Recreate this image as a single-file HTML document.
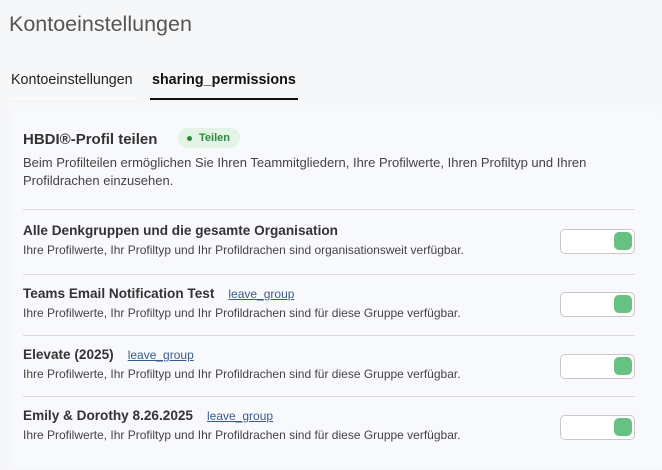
<html><head><style>
body{margin:0;width:662px;height:470px;background:#f6f7f9;font-family:"Liberation Sans",Arial,sans-serif;position:relative;overflow:hidden}
.a{position:absolute;white-space:nowrap}
.card{position:absolute;left:10px;top:111px;width:652px;height:357px;background:#f8f9fc;border-radius:4px}
.h{font-size:13.6px;font-weight:bold;color:#333}
.s{font-size:12px;color:#444}
.l{font-size:12px;color:#3a5a8c;text-decoration:underline;font-weight:normal;margin-left:14px}
.hr{position:absolute;left:23px;width:612px;height:1px;background:#dcdcdc}
.t{position:absolute;left:560px;width:73px;height:23px;border:1px solid #c8c8c8;border-radius:5px;background:#fff}
.t:after{content:"";position:absolute;right:2px;top:2px;width:18px;height:18px;border-radius:5px;background:#66c283}
</style></head><body>
<div class="a" style="left:9px;top:12px;font-size:21.5px;color:#555">Kontoeinstellungen</div>
<div class="a" style="left:11px;top:72px;font-size:14.3px;color:#222">Kontoeinstellungen</div>
<div class="a" style="left:10px;top:98px;width:126px;height:1px;background:#fff"></div>
<div class="a" style="left:152px;top:72px;font-size:14.3px;font-weight:bold;color:#111">sharing_permissions</div>
<div class="a" style="left:150px;top:98px;width:148px;height:2px;background:#111"></div>
<div class="card"></div>
<div class="a" style="left:23px;top:131px;font-size:15px;font-weight:bold;color:#333">HBDI®-Profil teilen</div>
<div class="a" style="left:178px;top:128px;height:20px;width:62px;border-radius:10px;background:#e3f3e6"></div>
<div class="a" style="left:187px;top:136px;width:5px;height:5px;border-radius:50%;background:#2e8a40"></div>
<div class="a" style="left:199px;top:132px;font-size:11px;font-weight:bold;color:#2e8a40">Teilen</div>
<div class="a" style="left:23px;top:154px;font-size:13px;color:#444;line-height:18px">Beim Profilteilen ermöglichen Sie Ihren Teammitgliedern, Ihre Profilwerte, Ihren Profiltyp und Ihren<br>Profildrachen einzusehen.</div>
<div class="hr" style="top:209px"></div>
<div class="a h" style="left:23px;top:223px">Alle Denkgruppen und die gesamte Organisation</div>
<div class="a s" style="left:23px;top:243px">Ihre Profilwerte, Ihr Profiltyp und Ihr Profildrachen sind organisationsweit verfügbar.</div>
<div class="t" style="top:229px"></div>
<div class="hr" style="top:274px"></div>
<div class="a h" style="left:23px;top:286px">Teams Email Notification Test<span class="l">leave_group</span></div>
<div class="a s" style="left:23px;top:306px">Ihre Profilwerte, Ihr Profiltyp und Ihr Profildrachen sind für diese Gruppe verfügbar.</div>
<div class="t" style="top:292px"></div>
<div class="hr" style="top:335px"></div>
<div class="a h" style="left:23px;top:347px">Elevate (2025)<span class="l">leave_group</span></div>
<div class="a s" style="left:23px;top:367px">Ihre Profilwerte, Ihr Profiltyp und Ihr Profildrachen sind für diese Gruppe verfügbar.</div>
<div class="t" style="top:354px"></div>
<div class="hr" style="top:396px"></div>
<div class="a h" style="left:23px;top:408px">Emily &amp; Dorothy 8.26.2025<span class="l">leave_group</span></div>
<div class="a s" style="left:23px;top:428px">Ihre Profilwerte, Ihr Profiltyp und Ihr Profildrachen sind für diese Gruppe verfügbar.</div>
<div class="t" style="top:415px"></div>
</body></html>
